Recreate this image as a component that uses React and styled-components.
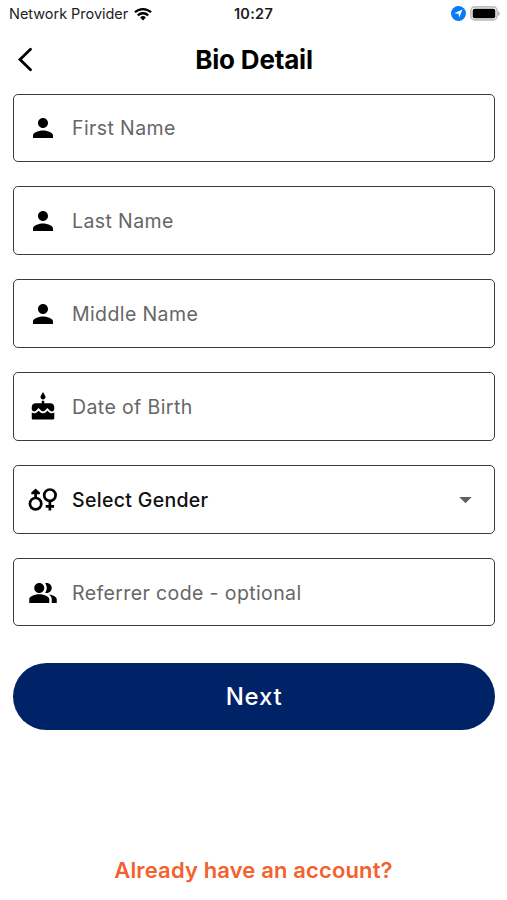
import React from 'react';
import styled, { createGlobalStyle } from 'styled-components';

const GlobalStyle = createGlobalStyle`
  * { box-sizing: border-box; }
  body { margin: 0; background: #fff; }
`;

const Screen = styled.main`
  display: flex;
  flex-direction: column;
  width: 507px;
  height: 900px;
  overflow: hidden;
  background: #fff;
  color: #000;
  font-family: Inter, 'Liberation Sans', sans-serif;
`;

const StatusBar = styled.div`
  display: grid;
  grid-template-columns: 1fr auto 1fr;
  align-items: center;
  height: 27px;
  padding: 0 7px 0 9px;
`;

const Carrier = styled.div`
  display: flex;
  align-items: center;
  gap: 6px;
  font-size: 14.5px;
  letter-spacing: -0.03px;
  color: #222;
  white-space: nowrap;
`;

const Clock = styled.time`
  margin-right: 2px;
  font-size: 14.5px;
  font-weight: 600;
  letter-spacing: 0.3px;
  color: #1c1c1c;
`;

const Indicators = styled.div`
  display: flex;
  justify-content: flex-end;
  align-items: center;
  gap: 4.5px;
`;

const Header = styled.header`
  display: grid;
  grid-template-columns: 50px 1fr 50px;
  align-items: center;
  height: 66.5px;
`;

const BackButton = styled.button`
  display: flex;
  padding: 0 0 2px 17px;
  border: 0;
  background: none;
  color: #000;
`;

const Title = styled.h1`
  margin: 0 0 1px 1px;
  text-align: center;
  font-size: 26px;
  font-weight: 700;
  letter-spacing: -0.18px;
`;

const Form = styled.form`
  display: flex;
  flex-direction: column;
  gap: 24.4px;
  padding: 0 12px 0 13px;
`;

const Field = styled.label`
  display: flex;
  align-items: center;
  height: 68.5px;
  padding: 1px 13px 0 13.5px;
  border: 1.5px solid #3c3c3c;
  border-radius: 5px;
`;

const FieldText = styled.span`
  flex: 1;
  margin-left: 14.5px;
  font-size: 19.5px;
  font-weight: ${(p) => (p.$filled ? 500 : 400)};
  letter-spacing: ${(p) => (p.$filled ? '0.32px' : '0.39px')};
  color: ${(p) => (p.$filled ? '#111' : '#666')};
`;

const NextButton = styled.button`
  height: 67px;
  margin-top: 12.2px;
  border: 0;
  border-radius: 34px;
  background: #002267;
  color: #fff;
  font: 500 24px Inter, 'Liberation Sans', sans-serif;
  letter-spacing: 0.7px;
`;

const LoginLink = styled.a`
  margin: auto 0 17px;
  text-align: center;
  font-size: 22px;
  font-weight: 600;
  line-height: 26px;
  letter-spacing: 0.14px;
  color: #f2622f;
`;

const Glyph = ({ children }) => (
  <svg width="30" height="30" viewBox="0 0 24 24" fill="#000">{children}</svg>
);

const PersonIcon = () => (
  <Glyph>
    <path d="M12 12c2.21 0 4-1.79 4-4s-1.79-4-4-4-4 1.79-4 4 1.79 4 4 4zm0 2c-2.67 0-8 1.34-8 4v2h16v-2c0-2.66-5.33-4-8-4z" />
  </Glyph>
);

const CakeIcon = () => (
  <Glyph>
    <path d="M12 6c1.11 0 2-.9 2-2 0-.38-.1-.73-.29-1.03L12 0l-1.71 2.97c-.19.3-.29.65-.29 1.03 0 1.1.9 2 2 2zm4.6 9.99l-1.07-1.07-1.08 1.07c-1.3 1.3-3.58 1.31-4.89 0l-1.07-1.07-1.09 1.07C6.75 16.64 5.88 17 4.96 17c-.73 0-1.4-.23-1.96-.61V21c0 .55.45 1 1 1h16c.55 0 1-.45 1-1v-4.61c-.56.38-1.23.61-1.96.61-.92 0-1.79-.36-2.44-1.01zM18 9h-5V7h-2v2H6c-1.66 0-3 1.34-3 3v1.54c0 1.08.88 1.96 1.96 1.96.52 0 1.02-.2 1.38-.57l2.14-2.13 2.13 2.13c.74.74 2.03.74 2.77 0l2.14-2.13 2.13 2.13c.37.37.86.57 1.38.57 1.08 0 1.96-.88 1.96-1.96V12c0-1.66-1.34-3-3-3z" />
  </Glyph>
);

const GenderIcon = () => (
  <svg width="30" height="30" viewBox="0 0 30 30" fill="none" stroke="#000" strokeWidth="2.7">
    <circle cx="7.6" cy="18.7" r="5.7" />
    <path d="M7.6 13V6.5" />
    <path d="M7.6 3.4l4.3 4v1.9H3.3V7.4z" fill="#000" stroke="none" />
    <circle cx="21.9" cy="10.2" r="5.7" />
    <path d="M21.9 16v9.6M17.7 21.3h8.4" />
  </svg>
);

const PeopleIcon = () => (
  <Glyph>
    <path d="M16.67 13.13C18.04 14.06 19 15.32 19 17v3h4v-3c0-2.18-3.57-3.47-6.33-3.87zM15 12c2.21 0 4-1.79 4-4s-1.79-4-4-4c-.47 0-.91.1-1.33.24C14.5 5.27 15 6.58 15 8s-.5 2.73-1.33 3.76c.42.14.86.24 1.33.24zM9 12c2.21 0 4-1.79 4-4s-1.79-4-4-4-4 1.79-4 4 1.79 4 4 4zm0 1c-2.67 0-8 1.34-8 4v3h16v-3c0-2.66-5.33-4-8-4z" />
  </Glyph>
);

const DropdownIcon = () => (
  <svg width="30" height="30" viewBox="0 0 24 24" fill="#606060">
    <path d="M6.6 9.6l5 5 5-5z" />
  </svg>
);

const WifiIcon = () => (
  <svg width="18" height="14" viewBox="0 0 19 14" fill="none" stroke="#000" strokeWidth="2.4">
    <path d="M1 5.2a12.3 12.3 0 0 1 17 0M4 8.4a8 8 0 0 1 11 0" />
    <path d="M9.5 13.8l-3-3.1a4.3 4.3 0 0 1 6 0z" fill="#000" stroke="none" />
  </svg>
);

const LocationIcon = () => (
  <svg width="15" height="15" viewBox="0 0 15 15">
    <circle cx="7.5" cy="7.5" r="7.5" fill="#087bf5" />
    <path d="M11.5 3.6L8.3 11.6 7.5 7.8 3.2 7.2z" fill="#fff" />
  </svg>
);

const BatteryIcon = () => (
  <svg width="30" height="15" viewBox="0 0 30 15">
    <rect x="0.9" y="0.9" width="26.2" height="13" rx="3.8" fill="#fff" stroke="#bdbdbd" strokeWidth="1.6" />
    <rect x="2.7" y="2.7" width="22.6" height="9.6" rx="2" fill="#000" />
    <path d="M28.2 5.2c2 .6 2 4.2 0 4.8z" fill="#aaa" />
  </svg>
);

const BackIcon = () => (
  <svg width="16" height="25" viewBox="0 0 16 25" fill="none" stroke="#000" strokeWidth="2.8" strokeLinecap="round">
    <path d="M13.5 2.2L3 12.5l10.5 10.3" />
  </svg>
);

const fields = [
  { label: 'First Name', Icon: PersonIcon },
  { label: 'Last Name', Icon: PersonIcon },
  { label: 'Middle Name', Icon: PersonIcon },
  { label: 'Date of Birth', Icon: CakeIcon },
  { label: 'Select Gender', Icon: GenderIcon, select: true },
  { label: 'Referrer code - optional', Icon: PeopleIcon },
];

export default function App() {
  return (
    <Screen>
      <GlobalStyle />
      <StatusBar>
        <Carrier>Network Provider <WifiIcon /></Carrier>
        <Clock>10:27</Clock>
        <Indicators><LocationIcon /><BatteryIcon /></Indicators>
      </StatusBar>
      <Header>
        <BackButton type="button" aria-label="Back"><BackIcon /></BackButton>
        <Title>Bio Detail</Title>
      </Header>
      <Form>
        {fields.map(({ label, Icon, select }) => (
          <Field key={label}>
            <Icon />
            <FieldText $filled={select}>{label}</FieldText>
            {select && <DropdownIcon />}
          </Field>
        ))}
        <NextButton type="button">Next</NextButton>
      </Form>
      <LoginLink>Already have an account?</LoginLink>
    </Screen>
  );
}
